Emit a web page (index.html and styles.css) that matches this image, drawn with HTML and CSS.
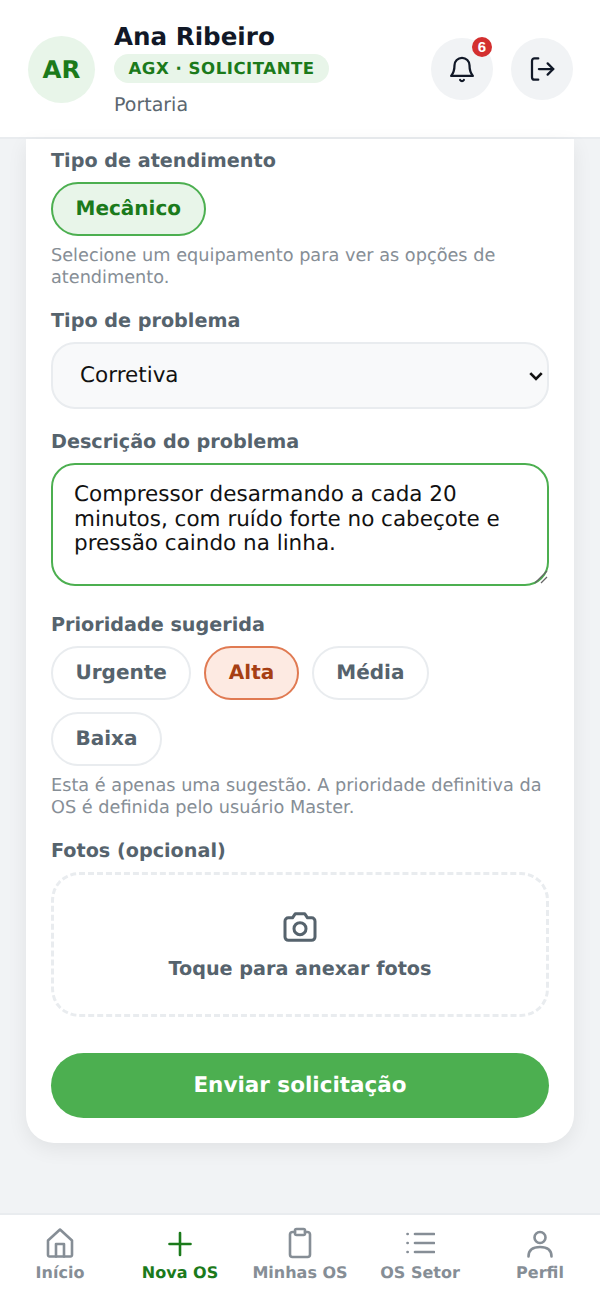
FILE: index.html
```html
<!DOCTYPE html>
<html lang="pt-BR">
<head>
    <meta charset="UTF-8">
    <meta name="viewport" content="width=device-width, initial-scale=1.0">
    <title>Nova OS</title>
    <link rel="stylesheet" href="styles.css">
</head>
<body>
    <!-- Header -->
    <header class="top-bar">
        <div class="avatar">AR</div>
        <div class="user-info">
            <div class="user-name">Ana Ribeiro</div>
            <div class="user-role">AGX · SOLICITANTE</div>
            <div class="user-sector">Portaria</div>
        </div>
        <button class="round-btn" type="button" aria-label="Notificações">
            <svg class="top-icon" viewBox="0 0 24 24"><path d="M6 9a6 6 0 0 1 12 0c0 4.500 1 6.500 2.700 8.500H3.300C5 15.500 6 13.500 6 9z"/><path d="M10.500 20.800a1.800 1.800 0 0 0 3 0"/></svg>
            <span class="badge">6</span>
        </button>
        <button class="round-btn" type="button" aria-label="Sair">
            <svg class="top-icon" viewBox="0 0 24 24"><path d="M9 3.500H6a2 2 0 0 0-2 2v13a2 2 0 0 0 2 2h3"/><path d="M9.500 12H21"/><path d="M16.500 7.500 21 12l-4.500 4.500"/></svg>
        </button>
    </header>

    <main class="content">
        <form class="card">
            <!-- Tipo de atendimento -->
            <label class="field-label">Tipo de atendimento</label>
            <div class="chips">
                <button type="button" class="chip chip-green">Mecânico</button>
            </div>
            <p class="hint">Selecione um equipamento para ver as opções de atendimento.</p>

            <!-- Tipo de problema -->
            <label class="field-label" for="problema">Tipo de problema</label>
            <div class="select-wrap">
                <select id="problema" class="select-box">
                    <option>Corretiva</option>
                    <option>Preventiva</option>
                </select>
                <svg class="select-arrow" viewBox="0 0 14 10"><path d="M2 2.500 7 7.500l5-5"/></svg>
            </div>

            <!-- Descricao -->
            <label class="field-label" for="descricao">Descrição do problema</label>
            <div class="text-wrap">
                <textarea id="descricao" class="text-box">Compressor desarmando a cada 20 minutos, com ruído forte no cabeçote e pressão caindo na linha.</textarea>
                <svg class="resize-grip" viewBox="0 0 14 14"><path d="M1 13 13 1"/><path d="M7 13l6-6"/></svg>
            </div>

            <!-- Prioridade -->
            <label class="field-label">Prioridade sugerida</label>
            <div class="chips">
                <button type="button" class="chip">Urgente</button>
                <button type="button" class="chip chip-orange">Alta</button>
                <button type="button" class="chip">Média</button>
                <button type="button" class="chip">Baixa</button>
            </div>
            <p class="hint">Esta é apenas uma sugestão. A prioridade definitiva da OS é definida pelo usuário Master.</p>

            <!-- Fotos -->
            <label class="field-label">Fotos (opcional)</label>
            <div class="photo-drop">
                <svg class="photo-icon" viewBox="0 0 24 24"><path d="M3 8.500a2 2 0 0 1 2-2h2.500L9.200 4h5.600l1.700 2.500H19a2 2 0 0 1 2 2V18a2 2 0 0 1-2 2H5a2 2 0 0 1-2-2z"/><circle cx="12" cy="13" r="3.600"/></svg>
                <span>Toque para anexar fotos</span>
            </div>

            <button type="button" class="send-btn">Enviar solicitação</button>
        </form>
    </main>

    <!-- Bottom nav -->
    <nav class="bottom-nav">
        <a class="nav-item">
            <svg class="nav-icon" viewBox="0 0 30 32"><path d="M3 28V13.500L15 2.500l12 11V28a1.500 1.500 0 0 1-1.500 1.500h-21A1.500 1.500 0 0 1 3 28z"/><path d="M11 29.500V17h8v12.500"/></svg>
            <span>Início</span>
        </a>
        <a class="nav-item nav-active">
            <svg class="nav-icon" viewBox="0 0 30 32"><path d="M15 6v22"/><path d="M4.500 17h21"/></svg>
            <span>Nova OS</span>
        </a>
        <a class="nav-item">
            <svg class="nav-icon" viewBox="0 0 30 32"><path d="M10 5H7.500A2.500 2.500 0 0 0 5 7.500v20A2.500 2.500 0 0 0 7.500 30h15a2.500 2.500 0 0 0 2.500-2.500v-20A2.500 2.500 0 0 0 22.500 5H20"/><rect x="10" y="2" width="10" height="6" rx="1.500"/></svg>
            <span>Minhas OS</span>
        </a>
        <a class="nav-item">
            <svg class="nav-icon" viewBox="0 0 30 32"><path d="M10 7h19"/><path d="M10 16h19"/><path d="M10 25h19"/><path d="M2.500 7h.2"/><path d="M2.500 16h.2"/><path d="M2.500 25h.2"/></svg>
            <span>OS Setor</span>
        </a>
        <a class="nav-item">
            <svg class="nav-icon" viewBox="0 0 30 32"><circle cx="15" cy="10.500" r="5.500"/><path d="M3.500 29.500c0-6 4-9.500 11.500-9.500s11.500 3.500 11.500 9.500"/></svg>
            <span>Perfil</span>
        </a>
    </nav>
</body>
</html>
```

FILE: styles.css
```css
* {
    box-sizing: border-box;
}
body {
    font-family: 'DejaVu Sans', sans-serif;
    text-rendering: geometricPrecision;
    background-color: #f1f3f5;
    margin: 0;
    height: 1298px;
    display: flex;
    flex-direction: column;
    overflow: hidden;
}
.top-bar {
    height: 139px;
    flex-shrink: 0;
    display: flex;
    align-items: center;
    padding: 2px 27px 0 28px;
    background-color: #fff;
    border-bottom: 2px solid #e9ecef;
}
.avatar {
    width: 67px;
    height: 67px;
    border-radius: 50%;
    background-color: #e8f5e9;
    color: #1b7a1b;
    font-size: 24.500px;
    font-weight: bold;
    display: flex;
    align-items: center;
    justify-content: center;
    flex-shrink: 0;
}
.user-info {
    flex: 1;
    margin-left: 19px;
}
.user-name {
    font-size: 24.600px;
    font-weight: bold;
    line-height: 30px;
    color: #111827;
}
.user-role {
    display: inline-block;
    margin-top: 2px;
    padding: 0 14.500px;
    height: 29px;
    line-height: 29px;
    border-radius: 15px;
    background-color: #e8f5e9;
    color: #1b7a1b;
    font-size: 16.600px;
    font-weight: bold;
    letter-spacing: 0.5px;
}
.user-sector {
    margin-top: 10px;
    font-size: 19px;
    line-height: 24px;
    color: #5b6770;
}
.round-btn {
    position: relative;
    width: 62px;
    height: 62px;
    margin: 0 0 1px 18px;
    padding: 0;
    border: none;
    border-radius: 50%;
    background-color: #f1f3f5;
    display: flex;
    align-items: center;
    justify-content: center;
}
.top-icon {
    width: 30px;
    height: 30px;
    fill: none;
    stroke: #111827;
    stroke-width: 1.800;
    stroke-linecap: round;
    stroke-linejoin: round;
}
.badge {
    position: absolute;
    top: -1px;
    right: 1px;
    width: 20px;
    height: 20px;
    border-radius: 50%;
    background-color: #d32f2f;
    color: #fff;
    font-size: 15px;
    font-weight: bold;
    line-height: 20px;
    text-align: center;
}
.content {
    flex: 1;
    min-height: 0;
    padding: 0 26px;
}
.card {
    background-color: #fff;
    border-radius: 0 0 28px 28px;
    box-shadow: 0 6px 20px rgba(0, 0, 0, 0.07);
    padding: 10px 25px 25px;
}
.field-label {
    display: block;
    font-size: 19.200px;
    font-weight: bold;
    line-height: 24px;
    color: #56636d;
    margin-bottom: 9px;
}
.chips {
    display: flex;
    flex-wrap: wrap;
    gap: 12px 13px;
}
.chip {
    height: 54px;
    padding: 0 22.500px 2px;
    border: 2px solid #e9ecef;
    border-radius: 27px;
    background-color: #fff;
    color: #56636d;
    font-family: inherit;
    font-size: 20px;
    font-weight: bold;
    text-rendering: inherit;
}
.chip-green {
    border-color: #4caf50;
    background-color: #e8f5e9;
    color: #1b7a1b;
}
.chip-orange {
    border-color: #e07a52;
    background-color: #fdeae2;
    color: #a63f14;
}
.hint {
    margin: 9px 0 20px;
    font-size: 17.700px;
    line-height: 22px;
    color: #868e96;
}
.select-wrap {
    position: relative;
    margin-bottom: 21px;
}
.select-box {
    display: block;
    width: 100%;
    height: 67px;
    padding: 0 27px;
    border: 2px solid #e9ecef;
    border-radius: 24px;
    background-color: #f8f9fa;
    color: #111;
    font-family: inherit;
    font-size: 21.500px;
    text-rendering: inherit;
    appearance: none;
}
.select-arrow {
    position: absolute;
    right: 5px;
    top: 28px;
    width: 16px;
    height: 12px;
    fill: none;
    stroke: #111;
    stroke-width: 2.400;
    pointer-events: none;
}
.text-wrap {
    position: relative;
    margin-bottom: 27px;
}
.text-box {
    display: block;
    width: 100%;
    height: 123px;
    padding: 18px 21px;
    border: 2px solid #4caf50;
    border-radius: 24px;
    background-color: #fff;
    color: #111;
    font-family: inherit;
    font-size: 21.500px;
    line-height: 24.600px;
    text-rendering: inherit;
    outline: none;
    resize: none;
}
.resize-grip {
    position: absolute;
    right: 1px;
    bottom: 2px;
    width: 14px;
    height: 14px;
    fill: none;
    stroke: #666;
    stroke-width: 1.200;
    pointer-events: none;
}
.photo-drop {
    height: 145px;
    margin-bottom: 36px;
    padding-bottom: 3px;
    border: 3px dashed #e9ecef;
    border-radius: 28px;
    display: flex;
    flex-direction: column;
    align-items: center;
    justify-content: center;
    gap: 10px;
    color: #56636d;
    font-size: 19.200px;
    font-weight: bold;
}
.photo-icon {
    width: 40px;
    height: 40px;
    fill: none;
    stroke: #56636d;
    stroke-width: 1.800;
    stroke-linecap: round;
    stroke-linejoin: round;
}
.send-btn {
    display: block;
    width: 100%;
    height: 65px;
    border: none;
    border-radius: 33px;
    background-color: #4caf50;
    color: #fff;
    font-family: inherit;
    font-size: 21.500px;
    font-weight: bold;
    text-rendering: inherit;
}
.bottom-nav {
    height: 85px;
    flex-shrink: 0;
    display: flex;
    background-color: #fff;
    border-top: 2px solid #e9ecef;
}
.nav-item {
    flex: 1;
    display: flex;
    flex-direction: column;
    align-items: center;
    padding-top: 12px;
    color: #868e96;
    font-size: 16px;
    font-weight: bold;
}
.nav-icon {
    width: 30px;
    height: 32px;
    margin-bottom: 4px;
    fill: none;
    stroke: #868e96;
    stroke-width: 2.600;
    stroke-linecap: round;
    stroke-linejoin: round;
}
.nav-active {
    color: #1b7a1b;
}
.nav-active .nav-icon {
    stroke: #1b7a1b;
}
```
